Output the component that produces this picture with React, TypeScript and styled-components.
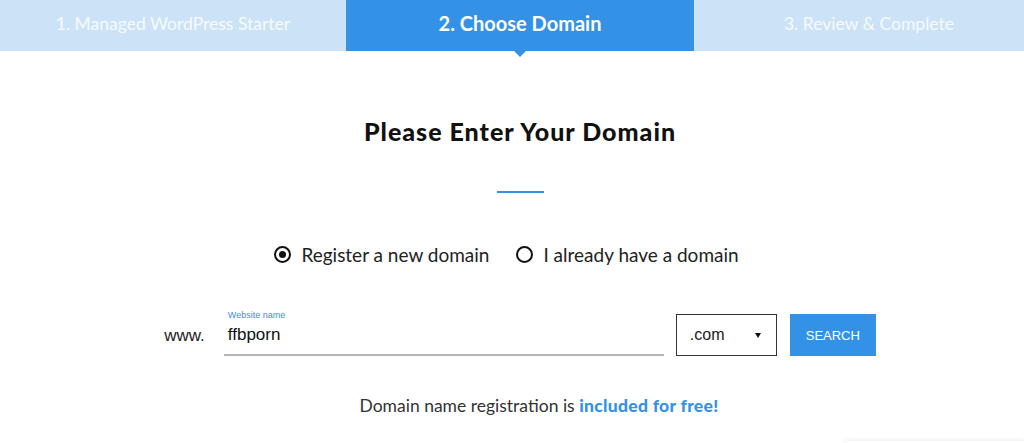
import styled, {createGlobalStyle} from 'styled-components';

const GlobalStyle = createGlobalStyle`
    html, body {
        margin: 0;
        padding: 0;
        background: #fff;
        overflow: hidden;
    }
    body {
        font-family: Lato, "Liberation Sans", sans-serif;
    }
`;

const steps = [
    {label: '1. Managed WordPress Starter', width: 346},
    {label: '2. Choose Domain', width: 348, active: true},
    {label: '3. Review & Complete', width: 350},
];

const App = () => {
    return <Root>
        <GlobalStyle/>
        <Steps>
            {steps.map(step => (
                <Step key={step.label} $active={step.active} $width={step.width}>
                    {step.label}
                </Step>
            ))}
        </Steps>

        <Main>
            <Title>Please Enter Your Domain</Title>
            <Divider/>

            <Options>
                <Option>
                    <Radio $checked/>
                    <span>Register a new domain</span>
                </Option>
                <Option>
                    <Radio/>
                    <span>I already have a domain</span>
                </Option>
            </Options>

            <SearchRow>
                <Prefix>www.</Prefix>
                <Field>
                    <FieldLabel>Website name</FieldLabel>
                    <FieldValue>ffbporn</FieldValue>
                </Field>
                <Select>
                    <span>.com</span>
                    <Caret/>
                </Select>
                <SearchButton>SEARCH</SearchButton>
            </SearchRow>

            <Note>Domain name registration is <strong>included for free!</strong></Note>
        </Main>

        <Footer>
            <FooterCard/>
        </Footer>
    </Root>;
};

export default App;


const Root = styled.div`
    width: 1024px;
    height: 443px;
    overflow: hidden;
    display: flex;
    flex-direction: column;
`;

const Steps = styled.div`
    display: flex;
    height: 51px;
    background: #cce3f7;
`;

const Step = styled.div<{$active?: boolean; $width: number}>`
    position: relative;
    flex: 0 0 ${p => p.$width}px;
    display: flex;
    align-items: center;
    justify-content: center;
    padding-bottom: 5px;
    box-sizing: border-box;
    font-size: ${p => p.$active ? '20px' : '17.5px'};
    font-weight: ${p => p.$active ? 700 : 400};
    color: #fff;
    opacity: ${p => p.$active ? 1 : 0.85};
    background: ${p => p.$active ? '#3392e6' : 'transparent'};

    ${p => p.$active && `
        &::after {
            content: '';
            position: absolute;
            left: 50%;
            bottom: -6px;
            margin-left: -6px;
            border-left: 6px solid transparent;
            border-right: 6px solid transparent;
            border-top: 6px solid #3392e6;
        }
    `}
`;

const Main = styled.div`
    display: flex;
    flex-direction: column;
    align-items: center;
    padding-top: 65px;
    padding-left: 16px;
`;

const Title = styled.h1`
    margin: 0;
    font-family: Lato, "Liberation Sans", sans-serif;
    font-weight: 900;
    font-size: 25px;
    line-height: 30px;
    color: #111;
    letter-spacing: 1px;
`;

const Divider = styled.div`
    width: 47px;
    height: 2px;
    margin-top: 45px;
    background: #3392e6;
`;

const Options = styled.div`
    display: flex;
    gap: 27px;
    margin-top: 50px;
    margin-right: 27px;
`;

const Option = styled.label`
    display: flex;
    align-items: center;
    gap: 10px;
    font-size: 19px;
    color: #222;
`;

const Radio = styled.span<{$checked?: boolean}>`
    width: 17px;
    height: 17px;
    border: 2px solid #111;
    border-radius: 50%;
    box-sizing: border-box;
    display: flex;
    align-items: center;
    justify-content: center;

    &::after {
        content: '';
        width: 7px;
        height: 7px;
        border-radius: 50%;
        background: ${p => p.$checked ? '#111' : 'transparent'};
    }
`;

const SearchRow = styled.div`
    display: flex;
    align-items: flex-end;
    margin-top: 42px;
    font-family: "Liberation Sans", Arial, sans-serif;
`;

const Prefix = styled.div`
    font-size: 17px;
    color: #222;
    margin-right: 19px;
    padding-bottom: 10px;
`;

const Field = styled.div`
    width: 440px;
    height: 48px;
    box-sizing: border-box;
    border-bottom: 2px solid #b5b5b5;
    padding: 2px 4px 0;
    display: flex;
    flex-direction: column;
`;

const FieldLabel = styled.div`
    font-size: 9px;
    color: #3e8ee6;
    line-height: 11px;
`;

const FieldValue = styled.div`
    font-size: 17px;
    color: #111;
    line-height: 20px;
    margin-top: 4px;
`;

const Select = styled.div`
    margin-left: 12px;
    width: 101px;
    height: 42px;
    box-sizing: border-box;
    border: 1px solid #333;
    display: flex;
    align-items: center;
    justify-content: space-between;
    padding: 0 15px 0 13px;
    font-size: 16px;
    color: #222;
`;

const Caret = styled.span`
    width: 0;
    height: 0;
    border-left: 3.5px solid transparent;
    border-right: 3.5px solid transparent;
    border-top: 5px solid #111;
`;

const SearchButton = styled.button`
    margin-left: 13px;
    width: 86px;
    height: 42px;
    border: none;
    background: #3392e6;
    color: #fff;
    font-family: "Liberation Sans", Arial, sans-serif;
    font-size: 13px;
    padding: 0;
`;

const Note = styled.div`
    margin-top: 39px;
    margin-left: 38px;
    font-size: 17.5px;
    color: #333;

    strong {
        color: #3392e6;
        font-weight: 900;
        letter-spacing: 0.3px;
    }
`;

const Footer = styled.div`
    flex: 1;
    display: flex;
    justify-content: flex-end;
    align-items: flex-end;
`;

const FooterCard = styled.div`
    width: 180px;
    height: 4px;
    margin-bottom: -2px;
    border-radius: 4px 0 0 0;
    box-shadow: 0 -1px 4px rgba(0, 0, 0, 0.08);
`;
